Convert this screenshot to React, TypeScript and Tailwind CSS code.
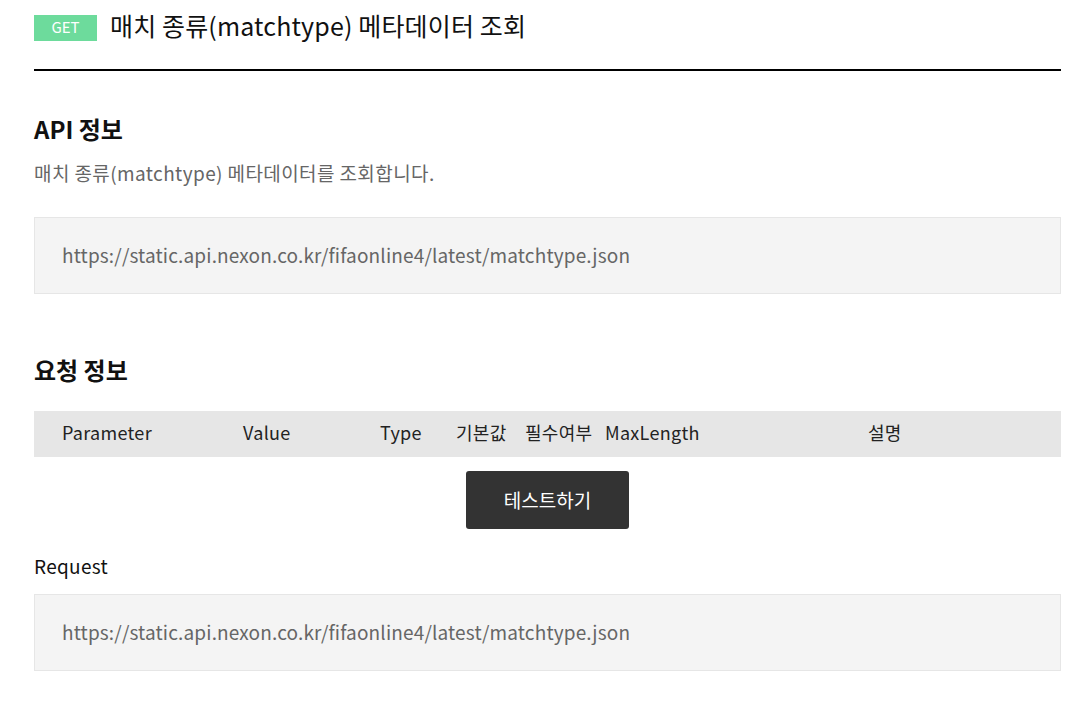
const font = { fontFamily: '"Noto Sans CJK KR", "Noto Sans", sans-serif' }

const url = 'https://static.api.nexon.co.kr/fifaonline4/latest/matchtype.json'

function UrlBox() {
  return (
    <div className="h-[77px] bg-[#f4f4f4] border border-[#e6e6e6] flex items-center pl-[27px] text-[19px] text-[#666] tracking-[0.15px]">
      {url}
    </div>
  )
}

export default function App() {
  return (
    <div className="bg-white min-h-[712px] pl-[34px] pr-[17px] text-[#111]" style={font}>
      <div className="flex items-center h-[52px] pt-[3px]">
        <span className="w-[63px] h-[26px] bg-[#6ddb9c] text-white text-[15px] flex items-center justify-center">
          GET
        </span>
        <h1 className="ml-[13px] mb-[5px] text-[25px] leading-none tracking-[0.15px]">매치 종류(matchtype) 메타데이터 조회</h1>
      </div>
      <div className="mt-[17px] h-[2px] bg-black" />

      <h2 className="mt-[46px] text-[24px] font-bold leading-none">API 정보</h2>
      <p className="mt-[22px] text-[19px] text-[#666] leading-none tracking-[0.4px]">
        매치 종류(matchtype) 메타데이터를 조회합니다.
      </p>
      <div className="mt-[35px]">
        <UrlBox />
      </div>

      <h2 className="mt-[64px] text-[24px] font-bold leading-none">요청 정보</h2>
      <div className="mt-[29px] h-[46px] pb-[3px] bg-[#e6e6e6] flex items-center text-[18px] text-[#222] tracking-[0.3px]">
        <span className="w-[209px] pl-[28px]">Parameter</span>
        <span className="w-[137px]">Value</span>
        <span className="w-[76px]">Type</span>
        <span className="w-[69px]">기본값</span>
        <span className="w-[80px]">필수여부</span>
        <span className="w-[263px]">MaxLength</span>
        <span>설명</span>
      </div>
      <div className="flex justify-center mt-[14px]">
        <button className="w-[163px] h-[58px] bg-[#333] text-white text-[19px] rounded-[3px]">
          테스트하기
        </button>
      </div>
      <p className="mt-[27px] text-[19px] leading-none tracking-[0.3px]">Request</p>
      <div className="mt-[19px]">
        <UrlBox />
      </div>
    </div>
  )
}
